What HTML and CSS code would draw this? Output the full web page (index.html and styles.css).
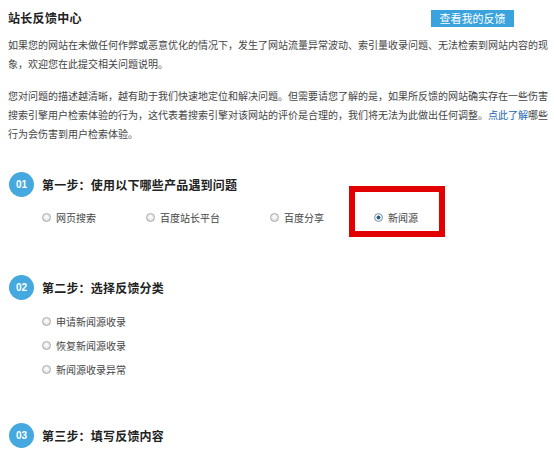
FILE: index.html
```html
<!DOCTYPE html>
<html lang="zh-CN">
<head>
<meta charset="utf-8">
<title>站长反馈中心</title>
<link rel="stylesheet" href="styles.css">
</head>
<body>
<div class="page">
  <div class="header">
    <h1 class="title">站长反馈中心</h1>
    <a class="btn" href="#">查看我的反馈</a>
  </div>
  <p class="para para-first">如果您的网站在未做任何作弊或恶意优化的情况下，发生了网站流量异常波动、索引量收录问题、无法检索到网站内容的现象，欢迎您在此提交相关问题说明。</p>
  <p class="para para-second">您对问题的描述越清晰，越有助于我们快速地定位和解决问题。但需要请您了解的是，如果所反馈的网站确实存在一些伤害搜索引擎用户检索体验的行为，这代表着搜索引擎对该网站的评价是合理的，我们将无法为此做出任何调整。<a class="link" href="#">点此了解</a>哪些行为会伤害到用户检索体验。</p>

  <div class="step step-1">
    <div class="step-head"><span class="num">01</span><span class="step-title">第一步：使用以下哪些产品遇到问题</span></div>
    <div class="options-row">
      <label class="opt"><span class="radio"></span><span class="opt-text">网页搜索</span></label>
      <label class="opt"><span class="radio"></span><span class="opt-text">百度站长平台</span></label>
      <label class="opt"><span class="radio"></span><span class="opt-text">百度分享</span></label>
      <label class="opt opt-marked"><span class="radio checked"></span><span class="opt-text">新闻源</span><span class="red-box"></span></label>
    </div>
  </div>

  <div class="step step-2">
    <div class="step-head"><span class="num">02</span><span class="step-title">第二步：选择反馈分类</span></div>
    <div class="options-col">
      <label class="opt"><span class="radio"></span><span class="opt-text">申请新闻源收录</span></label>
      <label class="opt"><span class="radio"></span><span class="opt-text">恢复新闻源收录</span></label>
      <label class="opt"><span class="radio"></span><span class="opt-text">新闻源收录异常</span></label>
    </div>
  </div>

  <div class="step step-3">
    <div class="step-head"><span class="num">03</span><span class="step-title">第三步：填写反馈内容</span></div>
  </div>
</div>
</body>
</html>
```
FILE: styles.css
```css
html, body {
  margin: 0;
  padding: 0;
  background: #ffffff;
}
body {
  font-family: "Noto Sans CJK SC", "Noto Sans", sans-serif;
  color: #444444;
  width: 554px;
  overflow: hidden;
}
.page {
  padding: 0 0 0 8px;
  width: 546px;
}
.header {
  height: 35px;
  display: flex;
  align-items: center;
  justify-content: space-between;
  padding-right: 40px;
  padding-top: 1px;
  box-sizing: border-box;
}
.title {
  margin: 0;
  font-size: 12px;
  letter-spacing: 0.3px;
  font-weight: bold;
  color: #222222;
  line-height: 16px;
}
.btn {
  display: flex;
  align-items: center;
  justify-content: center;
  width: 83px;
  height: 17px;
  background: #3aa2dc;
  color: #ffffff;
  font-size: 11px;
  text-decoration: none;
  line-height: 17px;
}
.para {
  margin: 0;
  font-size: 10px;
  line-height: 19px;
  color: #444444;
}
.para-second {
  margin-top: 13px;
}
.link {
  color: #2266b0;
  text-decoration: none;
}
.step-head {
  display: flex;
  align-items: center;
  height: 25px;
}
.num {
  width: 25px;
  height: 25px;
  border-radius: 50%;
  background: #45a9df;
  color: #ffffff;
  font-family: "Liberation Sans", Arial, sans-serif;
  font-weight: bold;
  font-size: 10px;
  display: flex;
  align-items: center;
  justify-content: center;
  margin-left: 1px;
}
.step-title {
  margin-left: 8px;
  font-size: 12px;
  letter-spacing: 0.2px;
  font-weight: bold;
  color: #222222;
}
.step-1 {
  margin-top: 29px;
}
.step-2 {
  margin-top: 46px;
}
.step-3 {
  margin-top: 42px;
}
.options-row {
  display: flex;
  margin-top: 8px;
  padding-left: 34px;
}
.options-row .opt + .opt {
  margin-left: 50px;
}
.options-col {
  display: flex;
  flex-direction: column;
  margin-top: 9px;
  padding-left: 34px;
}
.opt {
  display: flex;
  align-items: center;
  height: 24px;
  font-size: 10px;
  color: #444444;
}
.radio {
  width: 7px;
  height: 7px;
  border-radius: 50%;
  border: 1px solid #a8a8a8;
  background: radial-gradient(circle at 50% 40%, #ffffff 0%, #e6e6e6 60%, #cfcfcf 100%);
  flex: none;
}
.radio.checked {
  background: radial-gradient(circle, #1d4e6e 0%, #2c6a90 35%, #e8eef2 45%, #d7dde2 100%);
  border-color: #7f99ac;
}
.opt-text {
  margin-left: 5px;
}
.opt-marked {
  position: relative;
}
.red-box {
  position: absolute;
  left: -25px;
  top: -19px;
  width: 84px;
  height: 39px;
  border: 6px solid #e30000;
}
```
